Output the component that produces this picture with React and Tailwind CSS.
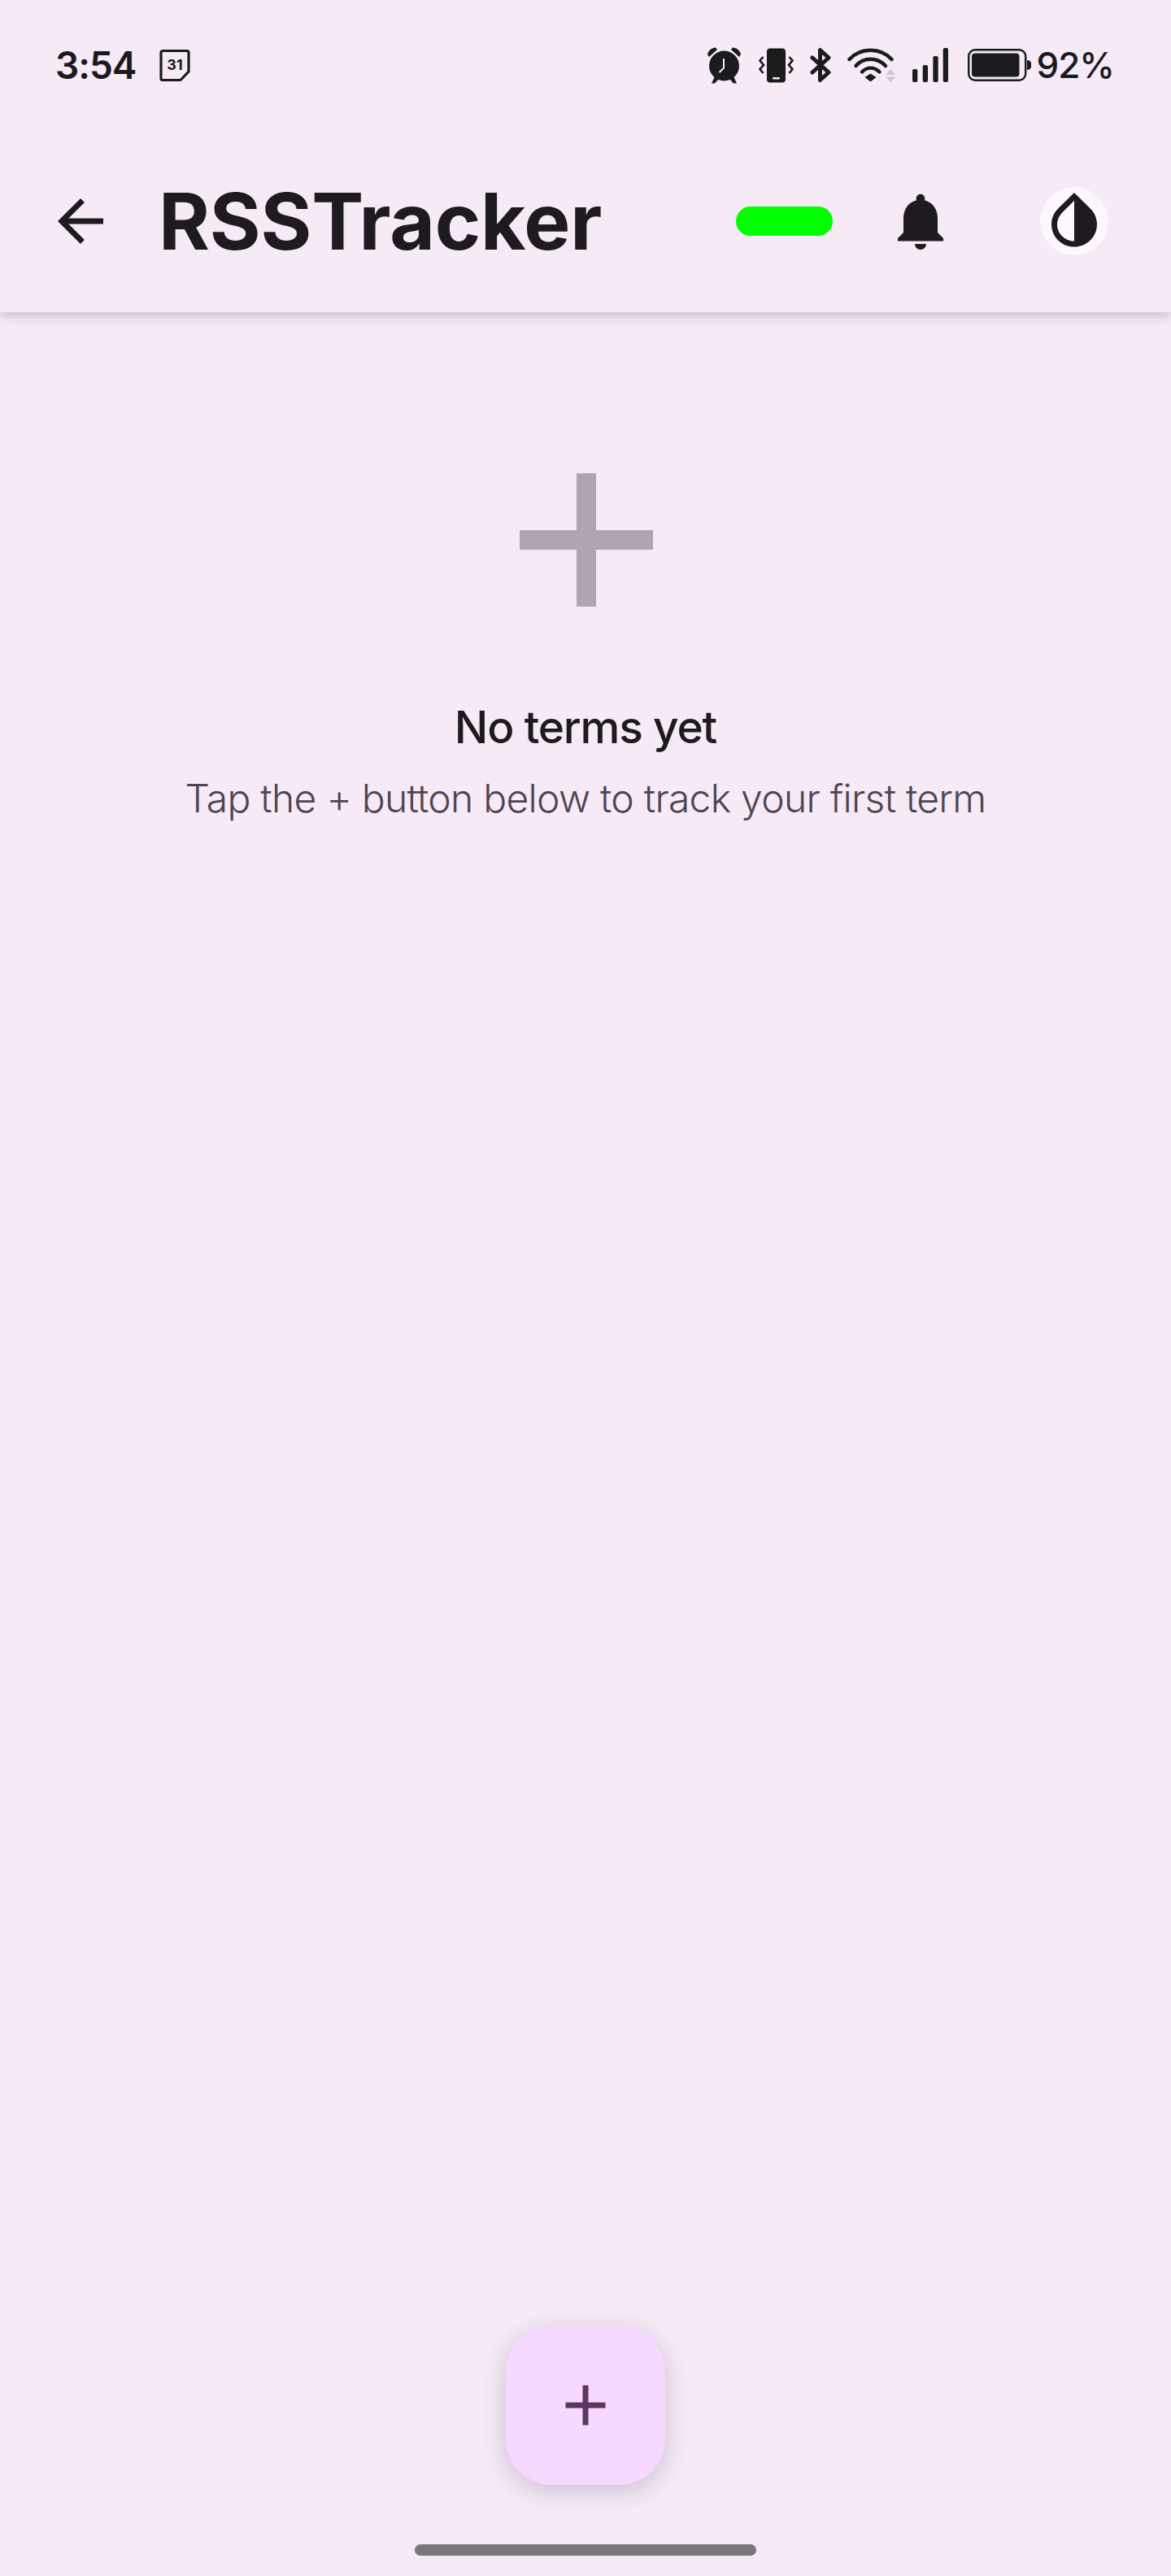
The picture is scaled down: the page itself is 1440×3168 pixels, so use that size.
import React from 'react';

const bg = 'bg-[#f5eaf6]';

function CalendarIcon() {
  return (
    <svg width="40" height="41" viewBox="0 0 40 41">
      <path d="M4 2.5H34a2 2 0 0 1 2 2V28L26 38.5H4a2 2 0 0 1-2-2V4.5a2 2 0 0 1 2-2Z" fill="none" stroke="#1b1b1d" strokeWidth="3.2" strokeLinejoin="round" />
      <text x="19" y="26" textAnchor="middle" fontFamily="Inter" fontWeight="700" fontSize="18" fill="#1b1b1d">31</text>
    </svg>
  );
}

function AlarmIcon() {
  return (
    <svg width="43" height="45" viewBox="0 0 43 45">
      <path d="M1 9 C2 4 6 1 11 0.5 L13 3 L3 12 Z" fill="#1b1b1d" />
      <path d="M42 9 C41 4 37 1 32 0.5 L30 3 L40 12 Z" fill="#1b1b1d" />
      <circle cx="21.5" cy="23" r="18.5" fill="#1b1b1d" />
      <path d="M6 44.5 L10 36 L15 39 L10 44.5 Z M37 44.5 L33 36 L28 39 L33 44.5 Z" fill="#1b1b1d" />
      <path d="M21 14V25.5L15.5 31" fill="none" stroke="#f5eaf6" strokeWidth="2" />
    </svg>
  );
}

function VibrateIcon() {
  return (
    <svg width="43" height="43" viewBox="0 0 43 43">
      <rect x="10" y="0.5" width="23" height="42" rx="4" fill="#1b1b1d" />
      <rect x="17" y="36" width="9" height="2.4" rx="1" fill="#f5eaf6" />
      <path d="M5.5 11 L1.5 15.5 L6 21 L1.5 26 L5.5 31" fill="none" stroke="#1b1b1d" strokeWidth="2.6" />
      <path d="M37.5 11 L41.5 15.5 L37 21 L41.5 26 L37.5 31" fill="none" stroke="#1b1b1d" strokeWidth="2.6" />
    </svg>
  );
}

function BluetoothIcon() {
  return (
    <svg width="26" height="44" viewBox="0 0 26 44">
      <path d="M3 13 L23 31 L12.5 40.5 V3.5 L23 13 L3 31" fill="none" stroke="#1b1b1d" strokeWidth="5" strokeLinecap="round" strokeLinejoin="round" />
    </svg>
  );
}

function WifiIcon() {
  return (
    <svg width="59" height="42" viewBox="0 0 59 42">
      <path d="M2.5 14 C16 -1 41 -1 54.5 14" fill="none" stroke="#1b1b1d" strokeWidth="4.4" strokeLinecap="round" />
      <path d="M10.5 22 C20 11 37 11 47 22" fill="none" stroke="#1b1b1d" strokeWidth="4.4" strokeLinecap="round" />
      <path d="M18 29.5 C24 23 33 23 39.5 29.5" fill="none" stroke="#1b1b1d" strokeWidth="4.4" strokeLinecap="round" />
      <path d="M21.5 36 L28.5 31.5 L35.5 36 L28.5 41.5 Z" fill="#1b1b1d" />
      <path d="M53 26 L59 33 H47 Z M53 42 L59 35.5 H47 Z" fill="#cfc5d1" />
    </svg>
  );
}

function SignalIcon() {
  return (
    <svg width="44" height="42" viewBox="0 0 44 42">
      <rect x="0" y="26" width="6.3" height="16" rx="2" fill="#1b1b1d" />
      <rect x="12.7" y="21" width="6.3" height="21" rx="2" fill="#1b1b1d" />
      <rect x="25.4" y="10" width="6.3" height="32" rx="2" fill="#1b1b1d" />
      <rect x="37.7" y="0" width="6.3" height="42" rx="2" fill="#1b1b1d" />
    </svg>
  );
}

function BatteryIcon() {
  return (
    <svg width="78" height="40" viewBox="0 0 78 40">
      <rect x="1.2" y="1.2" width="70" height="37.6" rx="8" fill="none" stroke="#1b1b1d" strokeWidth="2.4" />
      <rect x="5" y="5.5" width="58.5" height="29" rx="4" fill="#1b1b1d" />
      <path d="M73 14 C76 14 78 16 78 18 V22 C78 24 76 26 73 26 Z" fill="#1b1b1d" />
    </svg>
  );
}

export default function App() {
  return (
    <div className={`relative flex h-[3168px] w-full flex-col overflow-hidden ${bg} font-['Inter',sans-serif]`}>
      <header className={`relative z-10 ${bg} shadow-[0_3px_14px_rgba(60,40,65,0.28)]`}>
        <div className="flex h-[160px] items-center justify-between pl-[68px] pr-[70px]">
          <div className="flex items-center gap-[28px]">
            <span className="text-[46px] leading-none font-semibold tracking-[-1px] text-[#1b1b1d]">3:54</span>
            <CalendarIcon />
          </div>
          <div className="flex items-center">
            <AlarmIcon />
            <div className="ml-[21px]"><VibrateIcon /></div>
            <div className="ml-[20px]"><BluetoothIcon /></div>
            <div className="ml-[20px]"><WifiIcon /></div>
            <div className="ml-[21px]"><SignalIcon /></div>
            <div className="ml-[24px]"><BatteryIcon /></div>
            <span className="ml-[6px] text-[44px] leading-none font-medium tracking-[-1px] text-[#1b1b1d]">92%</span>
          </div>
        </div>
        <div className="flex h-[224px] items-center pl-[57px] pr-[77px]">
          <svg width="84" height="84" viewBox="0 0 24 24" fill="#1e1a20">
            <path d="M20 11H7.83l5.59-5.59L12 4l-8 8 8 8 1.41-1.41L7.83 13H20v-2z" />
          </svg>
          <h1 className="ml-[54px] flex-1 text-[96px] leading-none font-bold tracking-[-0.2px] text-[#1e1a20]">RSSTracker</h1>
          <div className="h-[36px] w-[119px] rounded-full bg-[#00ff00]"></div>
          <svg className="ml-[66px]" width="84" height="84" viewBox="0 0 24 24" fill="#1e1a20">
            <path d="M12 22c1.1 0 2-.9 2-2h-4c0 1.1.89 2 2 2zm6-6v-5c0-3.07-1.64-5.64-4.5-6.32V4c0-.83-.67-1.5-1.5-1.5s-1.5.67-1.5 1.5v.68C7.63 5.36 6 7.92 6 11v5l-2 2v1h16v-1l-2-2z" />
          </svg>
          <div className="ml-[105px] flex h-[84px] w-[84px] items-center justify-center rounded-full bg-[#fdf6fe]">
            <svg width="84" height="84" viewBox="0 0 24 24" fill="#1e1a20">
              <path d="M12 4.81V19c-3.31 0-6-2.63-6-5.87 0-1.56.62-3.03 1.75-4.14L12 4.81M6.35 7.56C4.9 8.99 4 10.96 4 13.13 4 17.48 7.58 21 12 21c4.42 0 8-3.52 8-7.87 0-2.17-.9-4.14-2.35-5.57L12 2 6.35 7.56z" />
            </svg>
          </div>
        </div>
      </header>

      <main className="flex flex-1 flex-col items-center pt-[198px]">
        <svg className="ml-[2px]" width="164" height="164" viewBox="0 0 164 164" fill="#b0a4b2">
          <rect x="70" y="0" width="24" height="164" />
          <rect x="0" y="70" width="164" height="24" />
        </svg>
        <h2 className="mt-[112px] text-[55px] leading-[72px] font-medium tracking-[-1.2px] text-[#1e1a20]">No terms yet</h2>
        <p className="mt-[20px] text-[48px] leading-[64px] font-light tracking-[-0.72px] text-[#4e4550]">Tap the + button below to track your first term</p>
      </main>

      <button className="absolute bottom-[112px] left-1/2 flex h-[196px] w-[196px] -translate-x-1/2 items-center justify-center rounded-[56px] bg-[#f7d8fe] shadow-[0_8px_30px_rgba(60,30,70,0.2)]">
        <svg width="84" height="84" viewBox="0 0 24 24" fill="#5d3566">
          <path d="M19 13h-6v6h-2v-6H5v-2h6V5h2v6h6v2z" />
        </svg>
      </button>

      <div className="absolute bottom-[25px] left-1/2 h-[14px] w-[420px] -translate-x-1/2 rounded-full bg-[#7b767c]"></div>
    </div>
  );
}
